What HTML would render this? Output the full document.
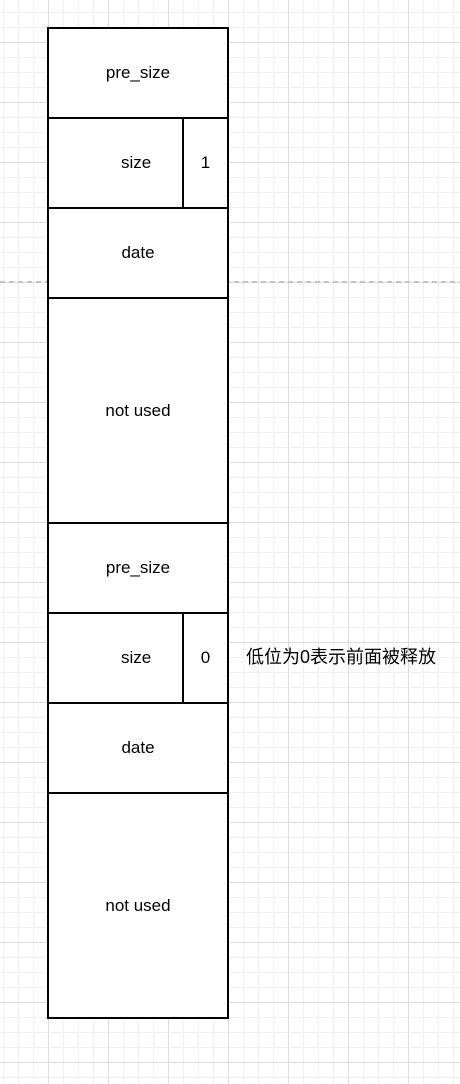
<!DOCTYPE html>
<html><head><meta charset="utf-8"><style>
html,body{margin:0;padding:0}
body{width:460px;height:1084px;position:relative;overflow:hidden;background-color:#fff;
background-image:
linear-gradient(to right,#dcdcdc 1px,transparent 1px),
linear-gradient(to bottom,#dcdcdc 1px,transparent 1px),
linear-gradient(to right,#f0f0f0 1px,transparent 1px),
linear-gradient(to bottom,#f0f0f0 1px,transparent 1px);
background-size:60px 60px,60px 60px,15px 15px,15px 15px;
background-position:48px 42px,48px 42px,3px 12px,3px 12px;
font-family:"Liberation Sans","Noto Sans CJK SC",sans-serif;font-size:17px;color:#000}
.c{position:absolute;border:2px solid #000;box-sizing:border-box;background:#fff;display:flex;align-items:center;justify-content:center}
.dash{position:absolute;left:0;top:281px;width:460px;height:2px;background:repeating-linear-gradient(to right,#c4c4c4 0 5px,transparent 5px 9px)}
</style></head><body>
<div class="dash"></div>
<div class="c" style="left:47px;top:27px;width:182px;height:92px">pre_size</div>
<div class="c" style="left:47px;top:117px;width:138px;height:92px;justify-content:flex-start;padding-left:72px">size</div>
<div class="c" style="left:182px;top:117px;width:47px;height:92px">1</div>
<div class="c" style="left:47px;top:207px;width:182px;height:92px">date</div>
<div class="c" style="left:47px;top:297px;width:182px;height:227px">not used</div>
<div class="c" style="left:47px;top:522px;width:182px;height:92px">pre_size</div>
<div class="c" style="left:47px;top:612px;width:138px;height:92px;justify-content:flex-start;padding-left:72px">size</div>
<div class="c" style="left:182px;top:612px;width:47px;height:92px">0</div>
<div class="c" style="left:47px;top:702px;width:182px;height:92px">date</div>
<div class="c" style="left:47px;top:792px;width:182px;height:227px">not used</div>
<div style="position:absolute;left:246px;top:646px;font-size:18px;line-height:22px;white-space:nowrap">低位为0表示前面被释放</div>
</body></html>
